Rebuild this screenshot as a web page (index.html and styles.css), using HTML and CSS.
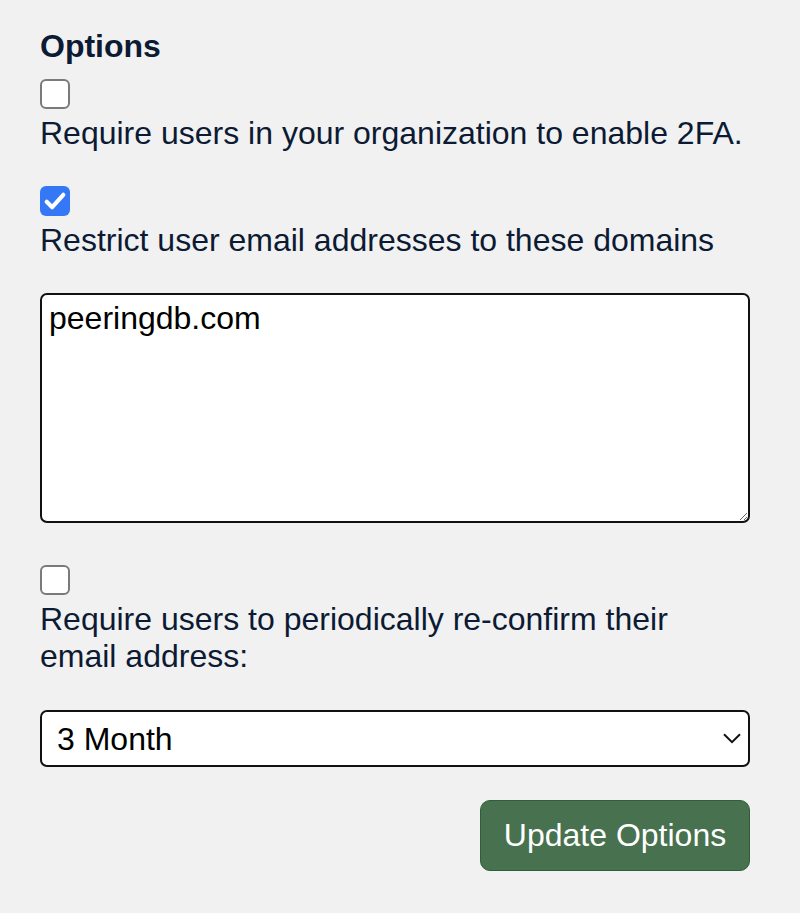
FILE: index.html
```html
<!DOCTYPE html>
<html lang="en">
<head>
<meta charset="utf-8">
<title>Options</title>
<link rel="stylesheet" href="styles.css">
</head>
<body>
<form class="panel">
  <div class="title">Options</div>

  <div class="group group-first">
    <span class="box"><input type="checkbox" class="check" id="opt-2fa"></span>
    <label class="label" for="opt-2fa">Require users in your organization to enable 2FA.</label>
  </div>

  <div class="group">
    <span class="box">
      <input type="checkbox" class="check" id="opt-domains" checked>
      <svg class="tick" viewBox="0 0 29 29" width="29" height="29" aria-hidden="true">
        <path d="M6.5 15.2 L11.8 20.5 L22.5 8.5" fill="none" stroke="#fff" stroke-width="4" stroke-linecap="round" stroke-linejoin="round"/>
      </svg>
    </span>
    <label class="label" for="opt-domains">Restrict user email addresses to these domains</label>
  </div>

  <textarea class="domains">peeringdb.com</textarea>

  <div class="group group-wide">
    <span class="box"><input type="checkbox" class="check" id="opt-reconfirm"></span>
    <label class="label" for="opt-reconfirm">Require users to periodically re-confirm their email address:</label>
  </div>

  <div class="select-wrap">
    <select class="period">
      <option>1 Month</option>
      <option selected>3 Month</option>
      <option>6 Month</option>
      <option>12 Month</option>
    </select>
    <svg class="chevron" viewBox="0 0 18 11" width="18" height="11" aria-hidden="true">
      <path d="M1 1.2 L9 9.2 L17 1.2" fill="none" stroke="#111" stroke-width="2"/>
    </svg>
  </div>

  <div class="actions">
    <button type="button" class="btn">Update Options</button>
  </div>
</form>
</body>
</html>
```

FILE: styles.css
```css
html, body {
  margin: 0;
  padding: 0;
  background: #f1f1f1;
}

body {
  font-family: "Liberation Sans", Arial, sans-serif;
  font-size: 32px;
  line-height: 37px;
  color: #0c1a33;
}

.panel {
  width: 710px;
  padding: 28px 40px 0 40px;
  display: flex;
  flex-direction: column;
}

.title {
  font-weight: bold;
  height: 37px;
}

.group {
  display: flex;
  flex-direction: column;
  align-items: flex-start;
  gap: 6px;
  margin-top: 34px;
}

.group-first {
  margin-top: 14px;
}

.group-wide {
  margin-top: 42px;
}

.box {
  position: relative;
  display: block;
  width: 30px;
  height: 30px;
}

.check {
  -webkit-appearance: none;
  appearance: none;
  display: block;
  margin: 0;
  width: 30px;
  height: 30px;
  box-sizing: border-box;
  border: 2px solid #7a7a7a;
  border-radius: 6px;
  background: #fff;
}

.check:checked {
  border: none;
  background: #3478f6;
}

.tick {
  position: absolute;
  left: 0;
  top: 0;
  width: 30px;
  height: 30px;
  pointer-events: none;
}

.label {
  display: block;
}

.domains {
  display: block;
  box-sizing: border-box;
  width: 710px;
  height: 230px;
  margin: 34px 0 0 0;
  padding: 5px 7px;
  border: 2px solid #111;
  border-radius: 7px;
  background: #fff;
  font-family: "Liberation Sans", Arial, sans-serif;
  font-size: 32px;
  line-height: 37px;
  color: #000;
  resize: vertical;
  outline: none;
}

.select-wrap {
  position: relative;
  margin-top: 35px;
  width: 710px;
}

.period {
  -webkit-appearance: none;
  appearance: none;
  display: block;
  box-sizing: border-box;
  width: 710px;
  height: 57px;
  margin: 0;
  padding: 0 50px 0 15px;
  border: 2px solid #111;
  border-radius: 7px;
  background: #fff;
  font-family: "Liberation Sans", Arial, sans-serif;
  font-size: 32px;
  color: #000;
}

.chevron {
  position: absolute;
  right: 9px;
  top: 23px;
  pointer-events: none;
}

.actions {
  display: flex;
  justify-content: flex-end;
  margin-top: 33px;
}

.btn {
  box-sizing: border-box;
  width: 270px;
  height: 71px;
  margin: 0;
  padding: 0;
  border: 1px solid #2f5f38;
  border-radius: 10px;
  background: #47714f;
  color: #fff;
  font-family: "Liberation Sans", Arial, sans-serif;
  font-size: 32px;
  line-height: 37px;
}
```
